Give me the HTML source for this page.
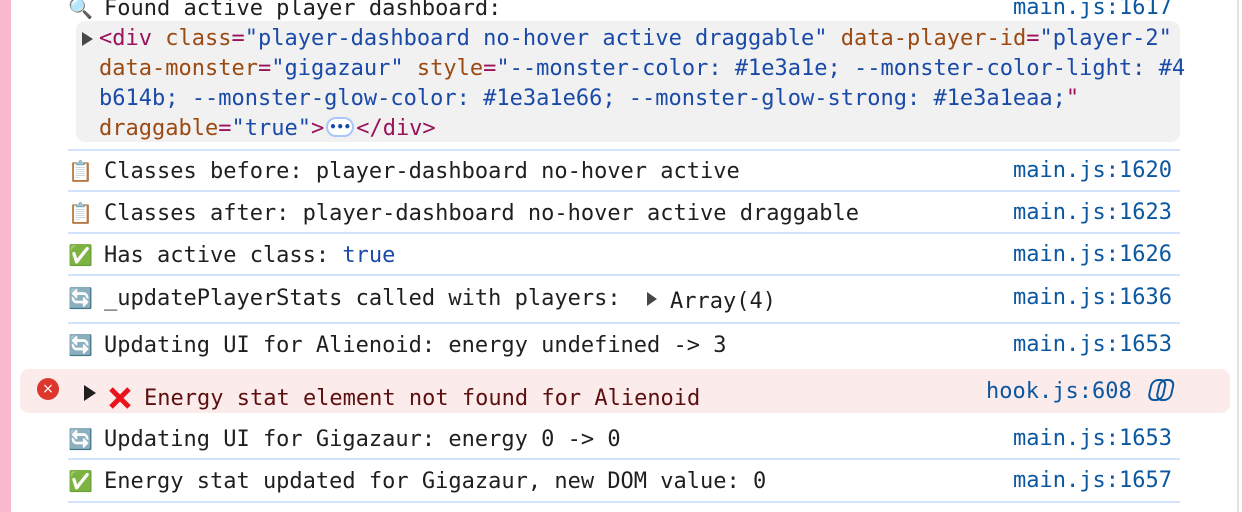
<!DOCTYPE html>
<html><head><meta charset="utf-8"><style>
body{margin:0;width:1242px;height:512px;background:#fff;position:relative;overflow:hidden;font-family:"DejaVu Sans Mono","Liberation Mono",monospace;font-size:22px;color:#1f1f1f}
.a{position:absolute;white-space:pre;line-height:30px}
.sep{position:absolute;left:68px;width:1112px;height:2px;background:#d3e3fd}
.lk{position:absolute;right:70px;color:#0b57a0;white-space:pre;line-height:30px}
.t{color:#99125a}.n{color:#9a4a12}.v{color:#1a4aa8}
.e{display:inline-block;width:36px;font-size:20px}
</style></head><body>
<div style="position:absolute;left:0;top:0;width:11px;height:512px;background:#fbb9cf"></div>
<div style="position:absolute;left:1237px;top:0;width:2px;height:512px;background:#e3e3e3"></div>

<div class="a" style="left:68px;top:-7px"><span class="e">🔍</span>Found active player dashboard:</div>
<div class="lk" style="top:-7px">main.js:1617</div>

<div style="position:absolute;left:76px;top:21px;width:1104px;height:121px;background:#f1f1f1;border-radius:9px"></div>
<svg style="position:absolute;left:80px;top:30px" width="16" height="18"><path d="M2 2 L13 9 L2 16Z" fill="#474747"/></svg>
<div class="a" style="left:99px;top:24px"><span class="t">&lt;div</span> <span class="n">class</span><span class="t">=</span><span class="v">"player-dashboard no-hover active draggable"</span> <span class="n">data-player-id</span><span class="t">=</span><span class="v">"player-2"</span>
<span class="n">data-monster</span><span class="t">=</span><span class="v">"gigazaur"</span> <span class="n">style</span><span class="t">=</span><span class="v">"--monster-color: #1e3a1e; --monster-color-light: #4
b614b; --monster-glow-color: #1e3a1e66; --monster-glow-strong: #1e3a1eaa;</span><span class="t">"</span>
<span class="n">draggable</span><span class="t">=</span><span class="v">"true"</span><span class="t">&gt;</span><span style="display:inline-block;width:28px;height:20px;border:2px solid #a8c7fa;border-radius:10px;vertical-align:middle;margin:0 2px;position:relative;top:-2px;background:#fff;font-size:12px;line-height:16px;text-align:center;color:#1a4aa8;font-weight:bold;box-sizing:border-box">•••</span><span class="t">&lt;/div&gt;</span></div>

<div class="sep" style="top:149px"></div>
<div class="a" style="left:68px;top:156px"><span class="e">📋</span>Classes before: player-dashboard no-hover active</div>
<div class="lk" style="top:156px">main.js:1620</div>
<div class="sep" style="top:190px"></div>
<div class="a" style="left:68px;top:198px"><span class="e">📋</span>Classes after: player-dashboard no-hover active draggable</div>
<div class="lk" style="top:198px">main.js:1623</div>
<div class="sep" style="top:232px"></div>
<div class="a" style="left:68px;top:240px"><span class="e">✅</span>Has active class: <span class="v">true</span></div>
<div class="lk" style="top:240px">main.js:1626</div>
<div class="sep" style="top:274px"></div>
<div class="a" style="left:68px;top:283px"><span class="e">🔄</span>_updatePlayerStats called with players:</div>
<svg style="position:absolute;left:645px;top:291px" width="14" height="16"><path d="M2 1 L12 8 L2 15Z" fill="#474747"/></svg>
<div class="a" style="left:670px;top:287px">Array(4)</div>
<div class="lk" style="top:283px">main.js:1636</div>
<div class="sep" style="top:322px"></div>
<div class="a" style="left:68px;top:330px"><span class="e">🔄</span>Updating UI for Alienoid: energy undefined -&gt; 3</div>
<div class="lk" style="top:330px">main.js:1653</div>

<div style="position:absolute;left:20px;top:369px;width:1210px;height:44px;background:#fcebeb;border-radius:9px"></div>
<div style="position:absolute;left:37px;top:378px;width:22px;height:22px;border-radius:50%;background:#dc362e;color:#fff;font-size:14px;line-height:22px;text-align:center;font-family:'DejaVu Sans',sans-serif">×</div>
<svg style="position:absolute;left:82px;top:384px" width="16" height="18"><path d="M2 1 L14 9 L2 17Z" fill="#1f1f1f"/></svg>
<svg style="position:absolute;left:108px;top:386px" width="24" height="24"><path d="M3 3 L21 21 M21 3 L3 21" stroke="#e8131b" stroke-width="5"/></svg>
<div class="a" style="left:144px;top:384px;color:#5c0f0f">Energy stat element not found for Alienoid</div>
<div class="a" style="left:986px;top:377px;color:#0b57a0">hook.js:608</div>
<svg style="position:absolute;left:1145px;top:377px" width="30" height="26" fill="none" stroke="#0b57a0" stroke-width="2"><rect x="3" y="3" width="14" height="20" rx="6" transform="skewX(-12) translate(5 0)"/><rect x="11" y="3" width="14" height="20" rx="6" transform="skewX(-12) translate(5 0)"/></svg>

<div class="a" style="left:68px;top:424px"><span class="e">🔄</span>Updating UI for Gigazaur: energy 0 -&gt; 0</div>
<div class="lk" style="top:424px">main.js:1653</div>
<div class="sep" style="top:458px"></div>
<div class="a" style="left:68px;top:466px"><span class="e">✅</span>Energy stat updated for Gigazaur, new DOM value: 0</div>
<div class="lk" style="top:466px">main.js:1657</div>
<div class="sep" style="top:501px"></div>
</body></html>
